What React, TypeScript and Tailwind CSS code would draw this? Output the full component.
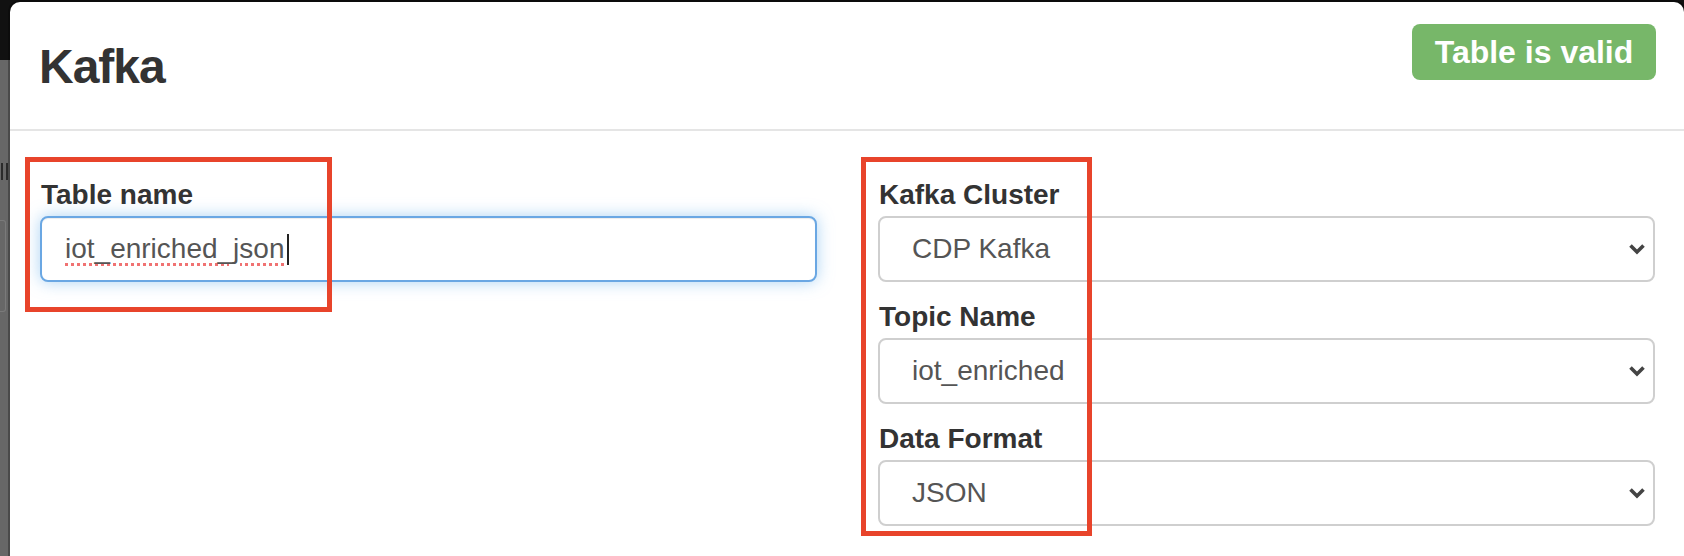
import React from "react";

function Chevron() {
  return (
    <svg width="18" height="12" viewBox="0 0 18 12" className="shrink-0">
      <polyline points="2.5,2.5 9,9 15.5,2.5" fill="none" stroke="#444" strokeWidth="3.6" strokeLinecap="butt" strokeLinejoin="miter" />
    </svg>
  );
}

function SelectField({ label, value, first }: { label: string; value: string; first?: boolean }) {
  return (
    <div className={first ? "flex flex-col" : "flex flex-col mt-[19px]"}>
      <div className="text-[28px] leading-[32px] font-bold text-[#333] mb-[5px] pl-[1px]">{label}</div>
      <div className="h-[66px] border-2 border-[#cfcfcf] rounded-[8px] bg-white flex items-center pl-[32px] pr-[7px]">
        <span className="flex-1 text-[28px] text-[#555] leading-none">{value}</span>
        <Chevron />
      </div>
    </div>
  );
}

export default function App() {
  return (
    <div className="w-[1684px] h-[556px] bg-[#111] flex overflow-hidden font-['Liberation_Sans','Helvetica_Neue',Arial,sans-serif]">
      <div className="w-[10px] shrink-0 flex flex-col">
        <div className="h-[60px] shrink-0" />
        <div className="flex-1 bg-[#676767] flex flex-col">
          <div className="h-[103px] shrink-0" />
          <div className="h-[17px] flex gap-[3px] pl-[1px]">
            <div className="w-[2px] bg-[#2a2a2a]" />
            <div className="w-[2px] bg-[#2a2a2a]" />
          </div>
          <div className="h-[40px] shrink-0" />
          <div className="h-[92px] w-[6px] border border-l-0 border-[#7a7a7a] rounded-r-[3px]" />
        </div>
      </div>
      <div className="flex-1 mt-[2px] bg-white rounded-t-[10px] shadow-[0_0_0_2px_rgba(0,0,0,0.28)] relative">
        <div className="h-[129px] border-b-2 border-[#e5e5e5] flex justify-between items-start pl-[29px] pr-[28px] pt-[22px]">
          <div className="mt-[19px] text-[48px] leading-[48px] font-bold text-[#333] tracking-[-1px]">Kafka</div>
          <div className="h-[56px] w-[244px] rounded-[8px] bg-[#77b769] text-white text-[32px] font-bold flex items-center justify-center leading-none">
            Table is valid
          </div>
        </div>
        <div className="grid grid-cols-2 gap-[61px] pl-[30px] pr-[29px] pt-[48px]">
          <div className="flex flex-col">
            <div className="text-[28px] leading-[32px] font-bold text-[#333] mb-[5px] pl-[1px]">Table name</div>
            <div className="h-[66px] border-2 border-[#6aa7e3] rounded-[8px] bg-white flex items-center pl-[23px] shadow-[inset_0_1px_1px_rgba(0,0,0,0.075),0_0_16px_rgba(102,175,233,0.55)]">
              <span className="text-[28px] text-[#555] leading-none underline decoration-dotted decoration-[#f07272] decoration-[3px] underline-offset-[5px]">
                iot_enriched_json
              </span>
              <span className="inline-block w-[2px] h-[31px] bg-[#222] ml-[2px]" />
            </div>
          </div>
          <div className="flex flex-col">
            <SelectField label="Kafka Cluster" value="CDP Kafka" first />
            <SelectField label="Topic Name" value="iot_enriched" />
            <SelectField label="Data Format" value="JSON" />
          </div>
        </div>
        <div className="absolute left-[15px] top-[155px] w-[307px] h-[155px] border-[5px] border-[#e8442b] pointer-events-none" />
        <div className="absolute left-[851px] top-[155px] w-[231px] h-[379px] border-[5px] border-[#e8442b] pointer-events-none" />
      </div>
    </div>
  );
}
